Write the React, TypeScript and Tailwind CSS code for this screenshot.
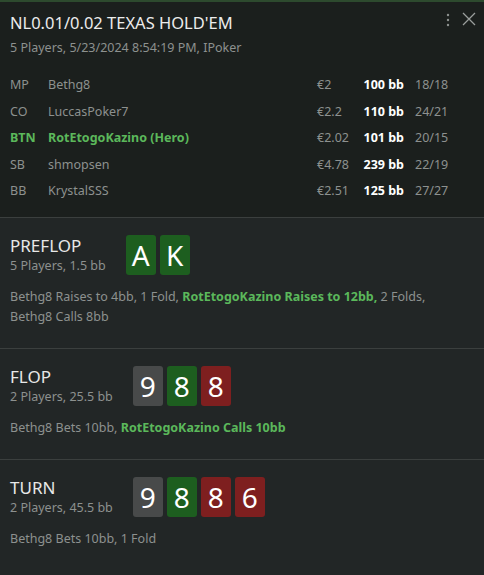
import React from 'react';

type Card = { v: string; c: 'g' | 'r' | 'k' };

const players = [
  { pos: 'MP', name: 'Bethg8', eur: '€2', bb: '100 bb', st: '18/18' },
  { pos: 'CO', name: 'LuccasPoker7', eur: '€2.2', bb: '110 bb', st: '24/21' },
  { pos: 'BTN', name: 'RotEtogoKazino (Hero)', eur: '€2.02', bb: '101 bb', st: '20/15', hero: true },
  { pos: 'SB', name: 'shmopsen', eur: '€4.78', bb: '239 bb', st: '22/19' },
  { pos: 'BB', name: 'KrystalSSS', eur: '€2.51', bb: '125 bb', st: '27/27' },
];

const cardBg = {
  g: 'bg-[#1d5e1f]',
  r: 'bg-[#7e1f1f]',
  k: 'bg-[#484a4a]',
};

const Cards = ({ cards }: { cards: Card[] }) => (
  <div className="flex gap-[4px]">
    {cards.map((c, i) => (
      <div
        key={i}
        className={`w-[30px] h-[40px] rounded-[3px] flex items-center justify-center text-white text-[28px] leading-none ${cardBg[c.c]}`}
      >
        {c.v}
      </div>
    ))}
  </div>
);

const Street = ({
  title,
  sub,
  cards,
  children,
  last,
}: {
  title: string;
  sub: string;
  cards: Card[];
  children: React.ReactNode;
  last?: boolean;
}) => (
  <div className={`px-[10px] pt-[17px] pb-[21px] ${last ? '' : 'border-b border-[#3b3f3e]'}`}>
    <div className="flex items-center gap-[20px]">
      <div>
        <div className="text-[17px] leading-[22px] text-[#e8e8e8]">{title}</div>
        <div className="text-[12.5px] leading-[18px] text-[#8d918f]">{sub}</div>
      </div>
      <Cards cards={cards} />
    </div>
    <div className="mt-[12px] max-w-[420px] text-[12.5px] leading-[20px] text-[#8d918f]">{children}</div>
  </div>
);

const Hero = ({ children }: { children: React.ReactNode }) => (
  <span className="font-bold text-[#5bb85b]">{children}</span>
);

export default function App() {
  return (
    <div
      className="w-[484px] h-[575px] bg-[#222626] overflow-hidden"
      style={{ fontFamily: '"Noto Sans", "Open Sans", sans-serif' }}
    >
      <div className="bg-[#1b1f1d] border-t-2 border-[#2d4a2e] border-b border-b-[#3b3f3e]">
        <div className="flex justify-between pl-[10px] pr-[8px] pt-[9px]">
          <div>
            <div className="text-[16.5px] leading-[24px] text-[#ececec]">NL0.01/0.02 TEXAS HOLD'EM</div>
            <div className="mt-[4px] text-[12.5px] leading-[18px] text-[#8d918f]">
              5 Players, 5/23/2024 8:54:19 PM, IPoker
            </div>
          </div>
          <div className="flex items-start gap-[12px] pt-[1px]">
            <svg width="4" height="14" viewBox="0 0 4 14" className="mt-[1px]">
              <circle cx="2" cy="2" r="1.2" fill="#8d918f" />
              <circle cx="2" cy="7" r="1.2" fill="#8d918f" />
              <circle cx="2" cy="12" r="1.2" fill="#8d918f" />
            </svg>
            <svg width="14" height="14" viewBox="0 0 14 14">
              <path d="M1 1L13 13M13 1L1 13" stroke="#9a9e9c" strokeWidth="1.3" />
            </svg>
          </div>
        </div>
        <div className="px-[10px] pt-[15px] pb-[12px] text-[12.5px]">
          {players.map((p) => (
            <div key={p.pos} className="flex items-center h-[26.6px] whitespace-nowrap">
              <div className={`w-[38px] ${p.hero ? 'font-bold text-[#5bb85b]' : 'text-[#8d918f]'}`}>{p.pos}</div>
              <div className={`flex-1 ${p.hero ? 'font-bold text-[#5bb85b]' : 'text-[#8d918f]'}`}>{p.name}</div>
              <div className="w-[44px] text-[#8d918f]">{p.eur}</div>
              <div className="w-[43px] flex justify-end font-bold text-white">{p.bb}</div>
              <div className="w-[70px] pl-[11px] text-[#8d918f]">{p.st}</div>
            </div>
          ))}
        </div>
      </div>

      <Street
        title="PREFLOP"
        sub="5 Players, 1.5 bb"
        cards={[
          { v: 'A', c: 'g' },
          { v: 'K', c: 'g' },
        ]}
      >
        Bethg8 Raises to 4bb, 1 Fold, <Hero>RotEtogoKazino Raises to 12bb,</Hero> 2 Folds, Bethg8 Calls 8bb
      </Street>
      <Street
        title="FLOP"
        sub="2 Players, 25.5 bb"
        cards={[
          { v: '9', c: 'k' },
          { v: '8', c: 'g' },
          { v: '8', c: 'r' },
        ]}
      >
        Bethg8 Bets 10bb, <Hero>RotEtogoKazino Calls 10bb</Hero>
      </Street>
      <Street
        title="TURN"
        sub="2 Players, 45.5 bb"
        cards={[
          { v: '9', c: 'k' },
          { v: '8', c: 'g' },
          { v: '8', c: 'r' },
          { v: '6', c: 'r' },
        ]}
        last
      >
        Bethg8 Bets 10bb, 1 Fold
      </Street>
    </div>
  );
}
